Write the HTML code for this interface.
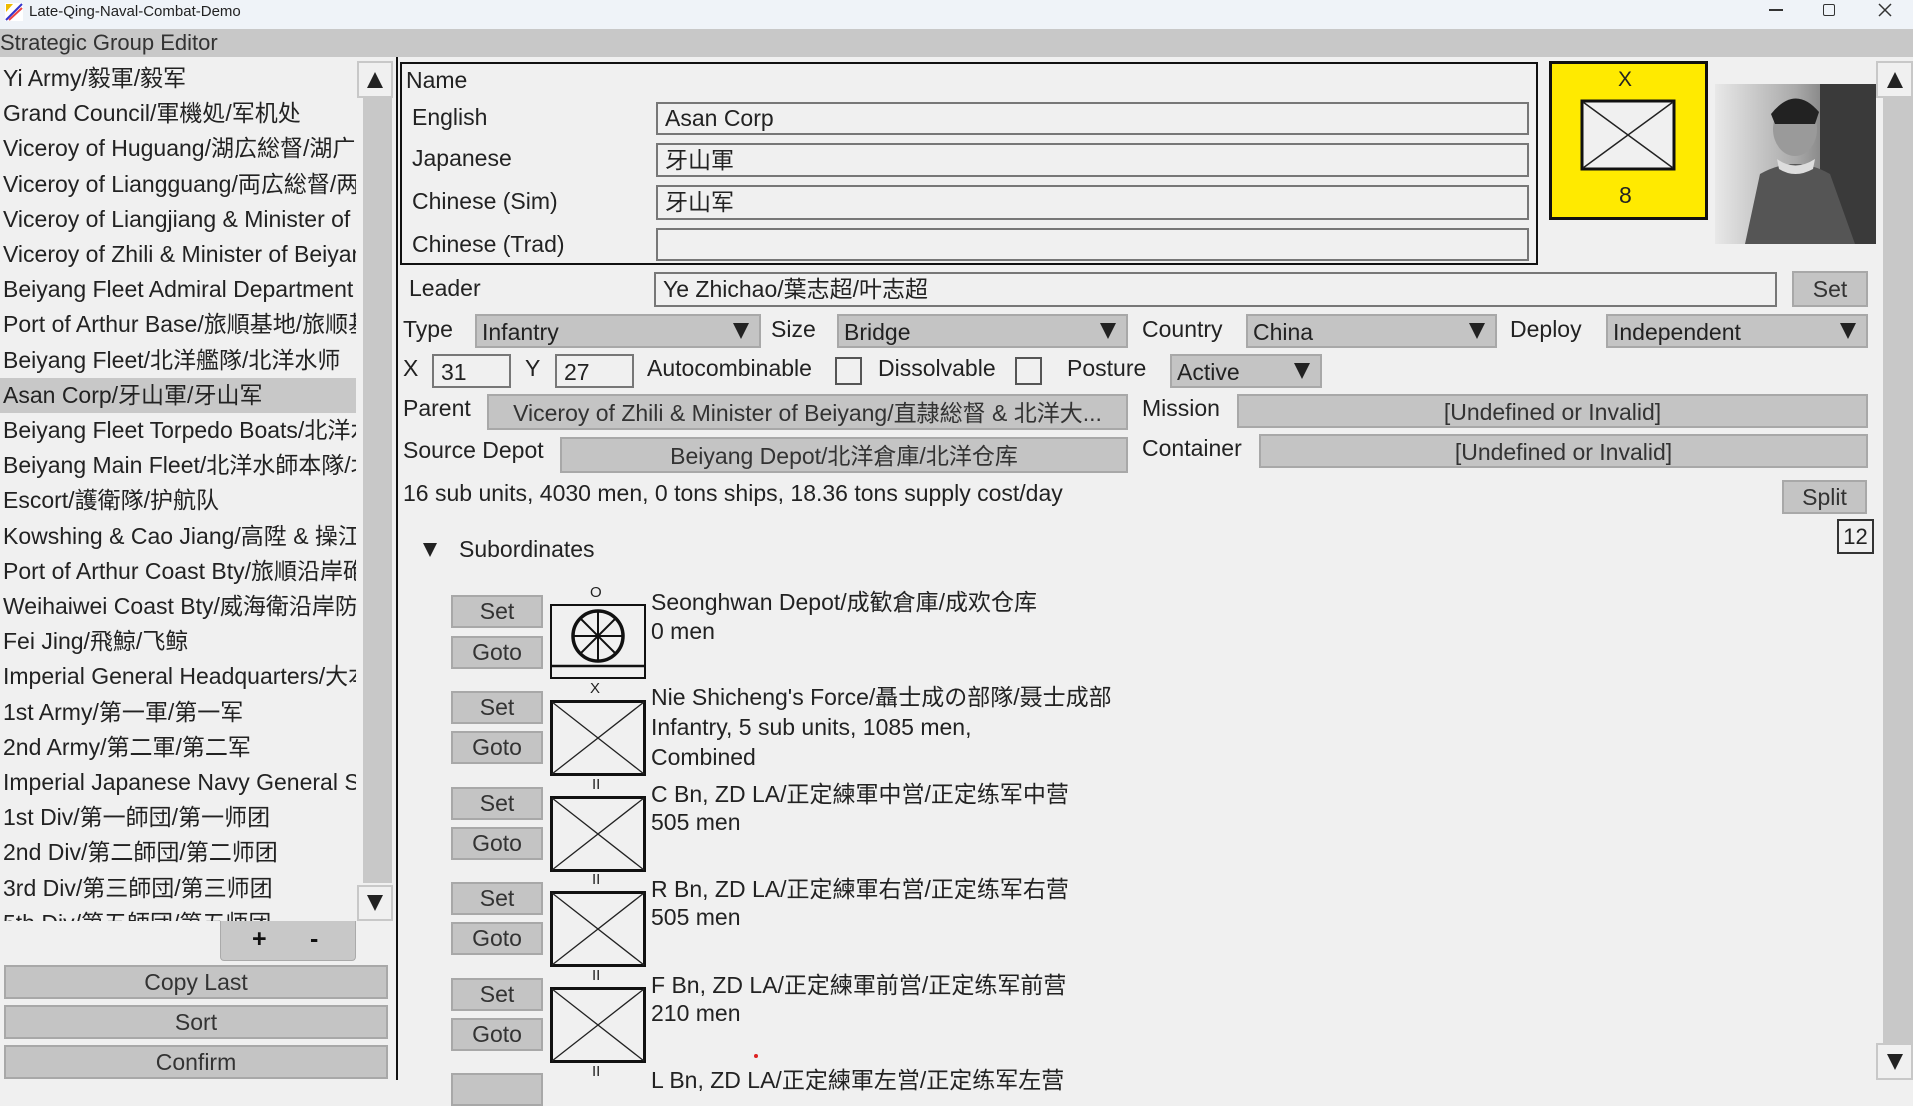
<!DOCTYPE html>
<html><head><meta charset="utf-8"><style>
*{box-sizing:border-box;margin:0;padding:0}
body{width:1913px;height:1080px;overflow:hidden;background:#f0f0f0;font-family:"Liberation Sans","Noto Sans CJK SC",sans-serif;color:#222;font-size:23px;position:relative}
.a{position:absolute;white-space:nowrap}
.btn{position:absolute;background:#c4c4c4;border:2px solid #a8a8a8;text-align:center;color:#333}
.inp{position:absolute;background:#f0f0f0;border:2px solid #777;padding-left:7px;color:#222}
.dd{position:absolute;background:#c4c4c4;border:2px solid #a8a8a8;padding-left:5px;color:#222}
.dd:after{content:"";position:absolute;right:10px;top:50%;margin-top:-8px;border-left:8px solid transparent;border-right:8px solid transparent;border-top:16px solid #222}
.row{position:absolute;left:0;width:356px;height:35px;line-height:35px;padding-left:3px;overflow:hidden;white-space:nowrap}
.lbl{position:absolute;white-space:nowrap}
.sb{position:absolute;background:#f0f0f0;border:2px solid #c8c8c8}
.tri-up{position:absolute;left:50%;top:50%;margin-left:-8px;margin-top:-8px;border-left:8px solid transparent;border-right:8px solid transparent;border-bottom:16px solid #222}
.tri-dn{position:absolute;left:50%;top:50%;margin-left:-8px;margin-top:-8px;border-left:8px solid transparent;border-right:8px solid transparent;border-top:16px solid #222}
</style></head><body>
<div class="a" style="left:0;top:0;width:1913px;height:29px;background:#eff3f8"></div>
<svg class="a" style="left:4px;top:2px" width="20" height="20"><rect x="1" y="1" width="18" height="18" fill="#fff"/><path d="M2 18 L18 2" stroke="#33c" stroke-width="2"/><path d="M5 18 L18 6" stroke="#e44" stroke-width="2"/><path d="M2 2 L9 2 L2 10Z" fill="#eb0"/></svg>
<div class="a" style="left:29px;top:3px;font-size:15px;color:#222">Late-Qing-Naval-Combat-Demo</div>
<div class="a" style="left:1769px;top:9px;width:14px;height:1.5px;background:#333"></div>
<div class="a" style="left:1823px;top:4px;width:12px;height:12px;border:1.5px solid #333;border-radius:2px"></div>
<svg class="a" style="left:1878px;top:3px" width="14" height="14"><path d="M1 1L13 13M13 1L1 13" stroke="#333" stroke-width="1.5"/></svg>
<div class="a" style="left:0;top:29px;width:1913px;height:28px;background:#c8c8c8"></div>
<div class="a" style="left:0;top:29px;line-height:28px;font-size:22px;color:#333">Strategic Group Editor</div>

<div class="a" style="left:0;top:61px;width:357px;height:860px;overflow:hidden">
<div class="row" style="top:0">Yi Army/毅軍/毅军</div>
<div class="row" style="top:35.2px">Grand Council/軍機処/军机处</div>
<div class="row" style="top:70.4px">Viceroy of Huguang/湖広総督/湖广总督</div>
<div class="row" style="top:105.6px">Viceroy of Liangguang/両広総督/两广总督</div>
<div class="row" style="top:140.8px">Viceroy of Liangjiang &amp; Minister of</div>
<div class="row" style="top:176px">Viceroy of Zhili &amp; Minister of Beiyang</div>
<div class="row" style="top:211.2px">Beiyang Fleet Admiral Department</div>
<div class="row" style="top:246.4px">Port of Arthur Base/旅順基地/旅顺基地</div>
<div class="row" style="top:281.6px">Beiyang Fleet/北洋艦隊/北洋水师</div>
<div class="row" style="top:316.8px;background:#c8c8c8">Asan Corp/牙山軍/牙山军</div>
<div class="row" style="top:352px">Beiyang Fleet Torpedo Boats/北洋水师</div>
<div class="row" style="top:387.2px">Beiyang Main Fleet/北洋水師本隊/北洋</div>
<div class="row" style="top:422.4px">Escort/護衛隊/护航队</div>
<div class="row" style="top:457.6px">Kowshing &amp; Cao Jiang/高陞 &amp; 操江/高升</div>
<div class="row" style="top:492.8px">Port of Arthur Coast Bty/旅順沿岸砲台</div>
<div class="row" style="top:528px">Weihaiwei Coast Bty/威海衛沿岸防御</div>
<div class="row" style="top:563.2px">Fei Jing/飛鯨/飞鲸</div>
<div class="row" style="top:598.4px">Imperial General Headquarters/大本营</div>
<div class="row" style="top:633.6px">1st Army/第一軍/第一军</div>
<div class="row" style="top:668.8px">2nd Army/第二軍/第二军</div>
<div class="row" style="top:704px">Imperial Japanese Navy General Staff</div>
<div class="row" style="top:739.2px">1st Div/第一師団/第一师团</div>
<div class="row" style="top:774.4px">2nd Div/第二師団/第二师团</div>
<div class="row" style="top:809.6px">3rd Div/第三師団/第三师团</div>
<div class="row" style="top:844.8px">5th Div/第五師団/第五师团</div>
</div>
<div class="a" style="left:360px;top:98px;width:33px;height:787px;background:#f0f0f0"></div>
<div class="a" style="left:360px;top:98px;width:32px;height:785px;background:#c8c8c8;border-left:3px solid #f0f0f0"></div>
<div class="sb" style="left:357px;top:61px;width:36px;height:37px"><div class="tri-up"></div></div>
<div class="sb" style="left:357px;top:885px;width:36px;height:36px"><div class="tri-dn"></div></div>
<div class="a" style="left:220px;top:921px;width:136px;height:40px;background:#c8c8c8;border:1px solid #aaa;border-top:none;border-radius:0 0 4px 4px"></div>
<div class="a" style="left:252px;top:925px;font-size:25px;font-weight:bold;color:#111">+</div>
<div class="a" style="left:310px;top:925px;font-size:25px;font-weight:bold;color:#111">-</div>
<div class="btn" style="left:4px;top:965px;width:384px;height:34px;line-height:30px">Copy Last</div>
<div class="btn" style="left:4px;top:1005px;width:384px;height:34px;line-height:30px">Sort</div>
<div class="btn" style="left:4px;top:1045px;width:384px;height:34px;line-height:30px">Confirm</div>
<div class="a" style="left:396px;top:57px;width:2px;height:1023px;background:#111"></div>

<div class="a" style="left:400px;top:62px;width:1138px;height:203px;border:2px solid #111"></div>
<div class="lbl" style="left:406px;top:67px">Name</div>
<div class="lbl" style="left:412px;top:104px">English</div>
<div class="lbl" style="left:412px;top:145px">Japanese</div>
<div class="lbl" style="left:412px;top:188px">Chinese (Sim)</div>
<div class="lbl" style="left:412px;top:231px">Chinese (Trad)</div>
<div class="inp" style="left:656px;top:102px;width:873px;height:33px;line-height:29px">Asan Corp</div>
<div class="inp" style="left:656px;top:143px;width:873px;height:34px;line-height:30px">牙山軍</div>
<div class="inp" style="left:656px;top:185px;width:873px;height:35px;line-height:31px">牙山军</div>
<div class="inp" style="left:656px;top:228px;width:873px;height:33px"></div>

<div class="a" style="left:1549px;top:61px;width:159px;height:159px;background:#ffea00;border:3px solid #111"></div>
<div class="a" style="left:1618px;top:68px;font-size:21px">X</div>
<svg class="a" style="left:1580px;top:99px" width="96" height="72"><rect x="2" y="2" width="92" height="68" fill="#f0f0f0" stroke="#111" stroke-width="3"/><path d="M3 3L93 69M93 3L3 69" stroke="#222" stroke-width="1.5"/></svg>
<div class="a" style="left:1619px;top:182px;font-size:23px">8</div>
<svg class="a" style="left:1715px;top:84px" width="161" height="160">
<defs><linearGradient id="g" x1="0" x2="1"><stop offset="0" stop-color="#e8e8e8"/><stop offset=".5" stop-color="#aaa"/><stop offset="1" stop-color="#444"/></linearGradient></defs>
<rect width="161" height="160" fill="url(#g)"/>
<rect x="105" y="0" width="56" height="160" fill="#3a3a3a"/>
<path d="M30 160 L45 90 Q80 70 115 90 L140 160Z" fill="#555"/>
<ellipse cx="80" cy="45" rx="22" ry="27" fill="#9a9a9a"/>
<path d="M56 30 Q80 0 104 28 L100 40 L60 40Z" fill="#222"/>
<path d="M62 75 Q80 88 100 75 L98 85 Q80 95 64 85Z" fill="#ddd"/>
</svg>
<div class="a" style="left:1880px;top:98px;width:33px;height:945px;background:#c8c8c8;border-left:3px solid #f0f0f0"></div>
<div class="sb" style="left:1876px;top:61px;width:37px;height:37px"><div class="tri-up"></div></div>
<div class="sb" style="left:1876px;top:1043px;width:37px;height:37px"><div class="tri-dn"></div></div>

<div class="lbl" style="left:409px;top:275px">Leader</div>
<div class="inp" style="left:654px;top:272px;width:1123px;height:35px;line-height:31px">Ye Zhichao/葉志超/叶志超</div>
<div class="btn" style="left:1792px;top:271px;width:76px;height:36px;line-height:32px">Set</div>

<div class="lbl" style="left:403px;top:316px">Type</div>
<div class="dd" style="left:475px;top:314px;width:286px;height:34px;line-height:32px">Infantry</div>
<div class="lbl" style="left:771px;top:316px">Size</div>
<div class="dd" style="left:837px;top:314px;width:291px;height:34px;line-height:32px">Bridge</div>
<div class="lbl" style="left:1142px;top:316px">Country</div>
<div class="dd" style="left:1246px;top:314px;width:251px;height:34px;line-height:32px">China</div>
<div class="lbl" style="left:1510px;top:316px">Deploy</div>
<div class="dd" style="left:1606px;top:314px;width:262px;height:34px;line-height:32px">Independent</div>

<div class="lbl" style="left:403px;top:355px">X</div>
<div class="inp" style="left:432px;top:354px;width:79px;height:34px;line-height:32px">31</div>
<div class="lbl" style="left:525px;top:355px">Y</div>
<div class="inp" style="left:555px;top:354px;width:79px;height:34px;line-height:32px">27</div>
<div class="lbl" style="left:647px;top:355px">Autocombinable</div>
<div class="a" style="left:835px;top:357px;width:27px;height:28px;border:2px solid #555"></div>
<div class="lbl" style="left:878px;top:355px">Dissolvable</div>
<div class="a" style="left:1015px;top:357px;width:27px;height:28px;border:2px solid #555"></div>
<div class="lbl" style="left:1067px;top:355px">Posture</div>
<div class="dd" style="left:1170px;top:354px;width:152px;height:34px;line-height:32px">Active</div>

<div class="lbl" style="left:403px;top:395px">Parent</div>
<div class="btn" style="left:487px;top:394px;width:641px;height:36px;line-height:34px">Viceroy of Zhili &amp; Minister of Beiyang/直隷総督 &amp; 北洋大...</div>
<div class="lbl" style="left:1142px;top:395px">Mission</div>
<div class="btn" style="left:1237px;top:394px;width:631px;height:34px;line-height:32px">[Undefined or Invalid]</div>
<div class="lbl" style="left:403px;top:437px">Source Depot</div>
<div class="btn" style="left:560px;top:437px;width:568px;height:36px;line-height:34px">Beiyang Depot/北洋倉庫/北洋仓库</div>
<div class="lbl" style="left:1142px;top:435px">Container</div>
<div class="btn" style="left:1259px;top:434px;width:609px;height:34px;line-height:32px">[Undefined or Invalid]</div>
<div class="lbl" style="left:403px;top:480px">16 sub units, 4030 men, 0 tons ships, 18.36 tons supply cost/day</div>
<div class="btn" style="left:1782px;top:480px;width:85px;height:34px;line-height:30px">Split</div>
<div class="a" style="left:1837px;top:519px;width:37px;height:35px;border:2px solid #333;text-align:center;line-height:31px;font-size:22px">12</div>

<div class="a" style="left:423px;top:543px;border-left:7px solid transparent;border-right:7px solid transparent;border-top:14px solid #222"></div>
<div class="lbl" style="left:459px;top:536px">Subordinates</div>

<div class="btn" style="left:451px;top:595px;width:92px;height:33px;line-height:29px">Set</div>
<div class="btn" style="left:451px;top:636px;width:92px;height:33px;line-height:29px">Goto</div>
<div class="a" style="left:590px;top:584px;font-size:15px">O</div>
<svg class="a" style="left:550px;top:604px" width="96" height="75"><rect x="1" y="1" width="94" height="73" fill="#f0f0f0" stroke="#111" stroke-width="2"/><line x1="1" y1="62" x2="95" y2="62" stroke="#111" stroke-width="2.5"/><circle cx="48" cy="32" r="25" fill="none" stroke="#111" stroke-width="3.5"/><path d="M48 7V57M23 32H73M30 14L66 50M66 14L30 50" stroke="#111" stroke-width="2"/></svg>
<div class="lbl" style="left:651px;top:583px">Seonghwan Depot/成歓倉庫/成欢仓库</div>
<div class="lbl" style="left:651px;top:618px">0 men</div>

<div class="btn" style="left:451px;top:691px;width:92px;height:33px;line-height:29px">Set</div>
<div class="btn" style="left:451px;top:731px;width:92px;height:33px;line-height:29px">Goto</div>
<div class="a" style="left:590px;top:680px;font-size:15px">X</div>
<svg class="a" style="left:550px;top:700px" width="96" height="76"><rect x="1.5" y="1.5" width="93" height="73" fill="#f0f0f0" stroke="#111" stroke-width="3"/><path d="M2 2L94 74M94 2L2 74" stroke="#222" stroke-width="1.3"/></svg>
<div class="lbl" style="left:651px;top:678px">Nie Shicheng's Force/聶士成の部隊/聂士成部</div>
<div class="lbl" style="left:651px;top:714px">Infantry, 5 sub units, 1085 men,</div>
<div class="lbl" style="left:651px;top:744px">Combined</div>

<div class="btn" style="left:451px;top:787px;width:92px;height:33px;line-height:29px">Set</div>
<div class="btn" style="left:451px;top:827px;width:92px;height:33px;line-height:29px">Goto</div>
<div class="a" style="left:592px;top:776px;font-size:15px">II</div>
<svg class="a" style="left:550px;top:796px" width="96" height="76"><rect x="1.5" y="1.5" width="93" height="73" fill="#f0f0f0" stroke="#111" stroke-width="3"/><path d="M2 2L94 74M94 2L2 74" stroke="#222" stroke-width="1.3"/></svg>
<div class="lbl" style="left:651px;top:775px">C Bn, ZD LA/正定練軍中営/正定练军中营</div>
<div class="lbl" style="left:651px;top:809px">505 men</div>

<div class="btn" style="left:451px;top:882px;width:92px;height:33px;line-height:29px">Set</div>
<div class="btn" style="left:451px;top:922px;width:92px;height:33px;line-height:29px">Goto</div>
<div class="a" style="left:592px;top:871px;font-size:15px">II</div>
<svg class="a" style="left:550px;top:891px" width="96" height="76"><rect x="1.5" y="1.5" width="93" height="73" fill="#f0f0f0" stroke="#111" stroke-width="3"/><path d="M2 2L94 74M94 2L2 74" stroke="#222" stroke-width="1.3"/></svg>
<div class="lbl" style="left:651px;top:870px">R Bn, ZD LA/正定練軍右営/正定练军右营</div>
<div class="lbl" style="left:651px;top:904px">505 men</div>

<div class="btn" style="left:451px;top:978px;width:92px;height:33px;line-height:29px">Set</div>
<div class="btn" style="left:451px;top:1018px;width:92px;height:33px;line-height:29px">Goto</div>
<div class="a" style="left:592px;top:967px;font-size:15px">II</div>
<svg class="a" style="left:550px;top:987px" width="96" height="76"><rect x="1.5" y="1.5" width="93" height="73" fill="#f0f0f0" stroke="#111" stroke-width="3"/><path d="M2 2L94 74M94 2L2 74" stroke="#222" stroke-width="1.3"/></svg>
<div class="lbl" style="left:651px;top:966px">F Bn, ZD LA/正定練軍前営/正定练军前营</div>
<div class="lbl" style="left:651px;top:1000px">210 men</div>
<div class="a" style="left:754px;top:1054px;width:4px;height:4px;border-radius:2px;background:#d22"></div>

<div class="btn" style="left:451px;top:1073px;width:92px;height:33px"></div>
<div class="a" style="left:592px;top:1063px;font-size:15px">II</div>
<div class="lbl" style="left:651px;top:1061px">L Bn, ZD LA/正定練軍左営/正定练军左营</div>
</body></html>
